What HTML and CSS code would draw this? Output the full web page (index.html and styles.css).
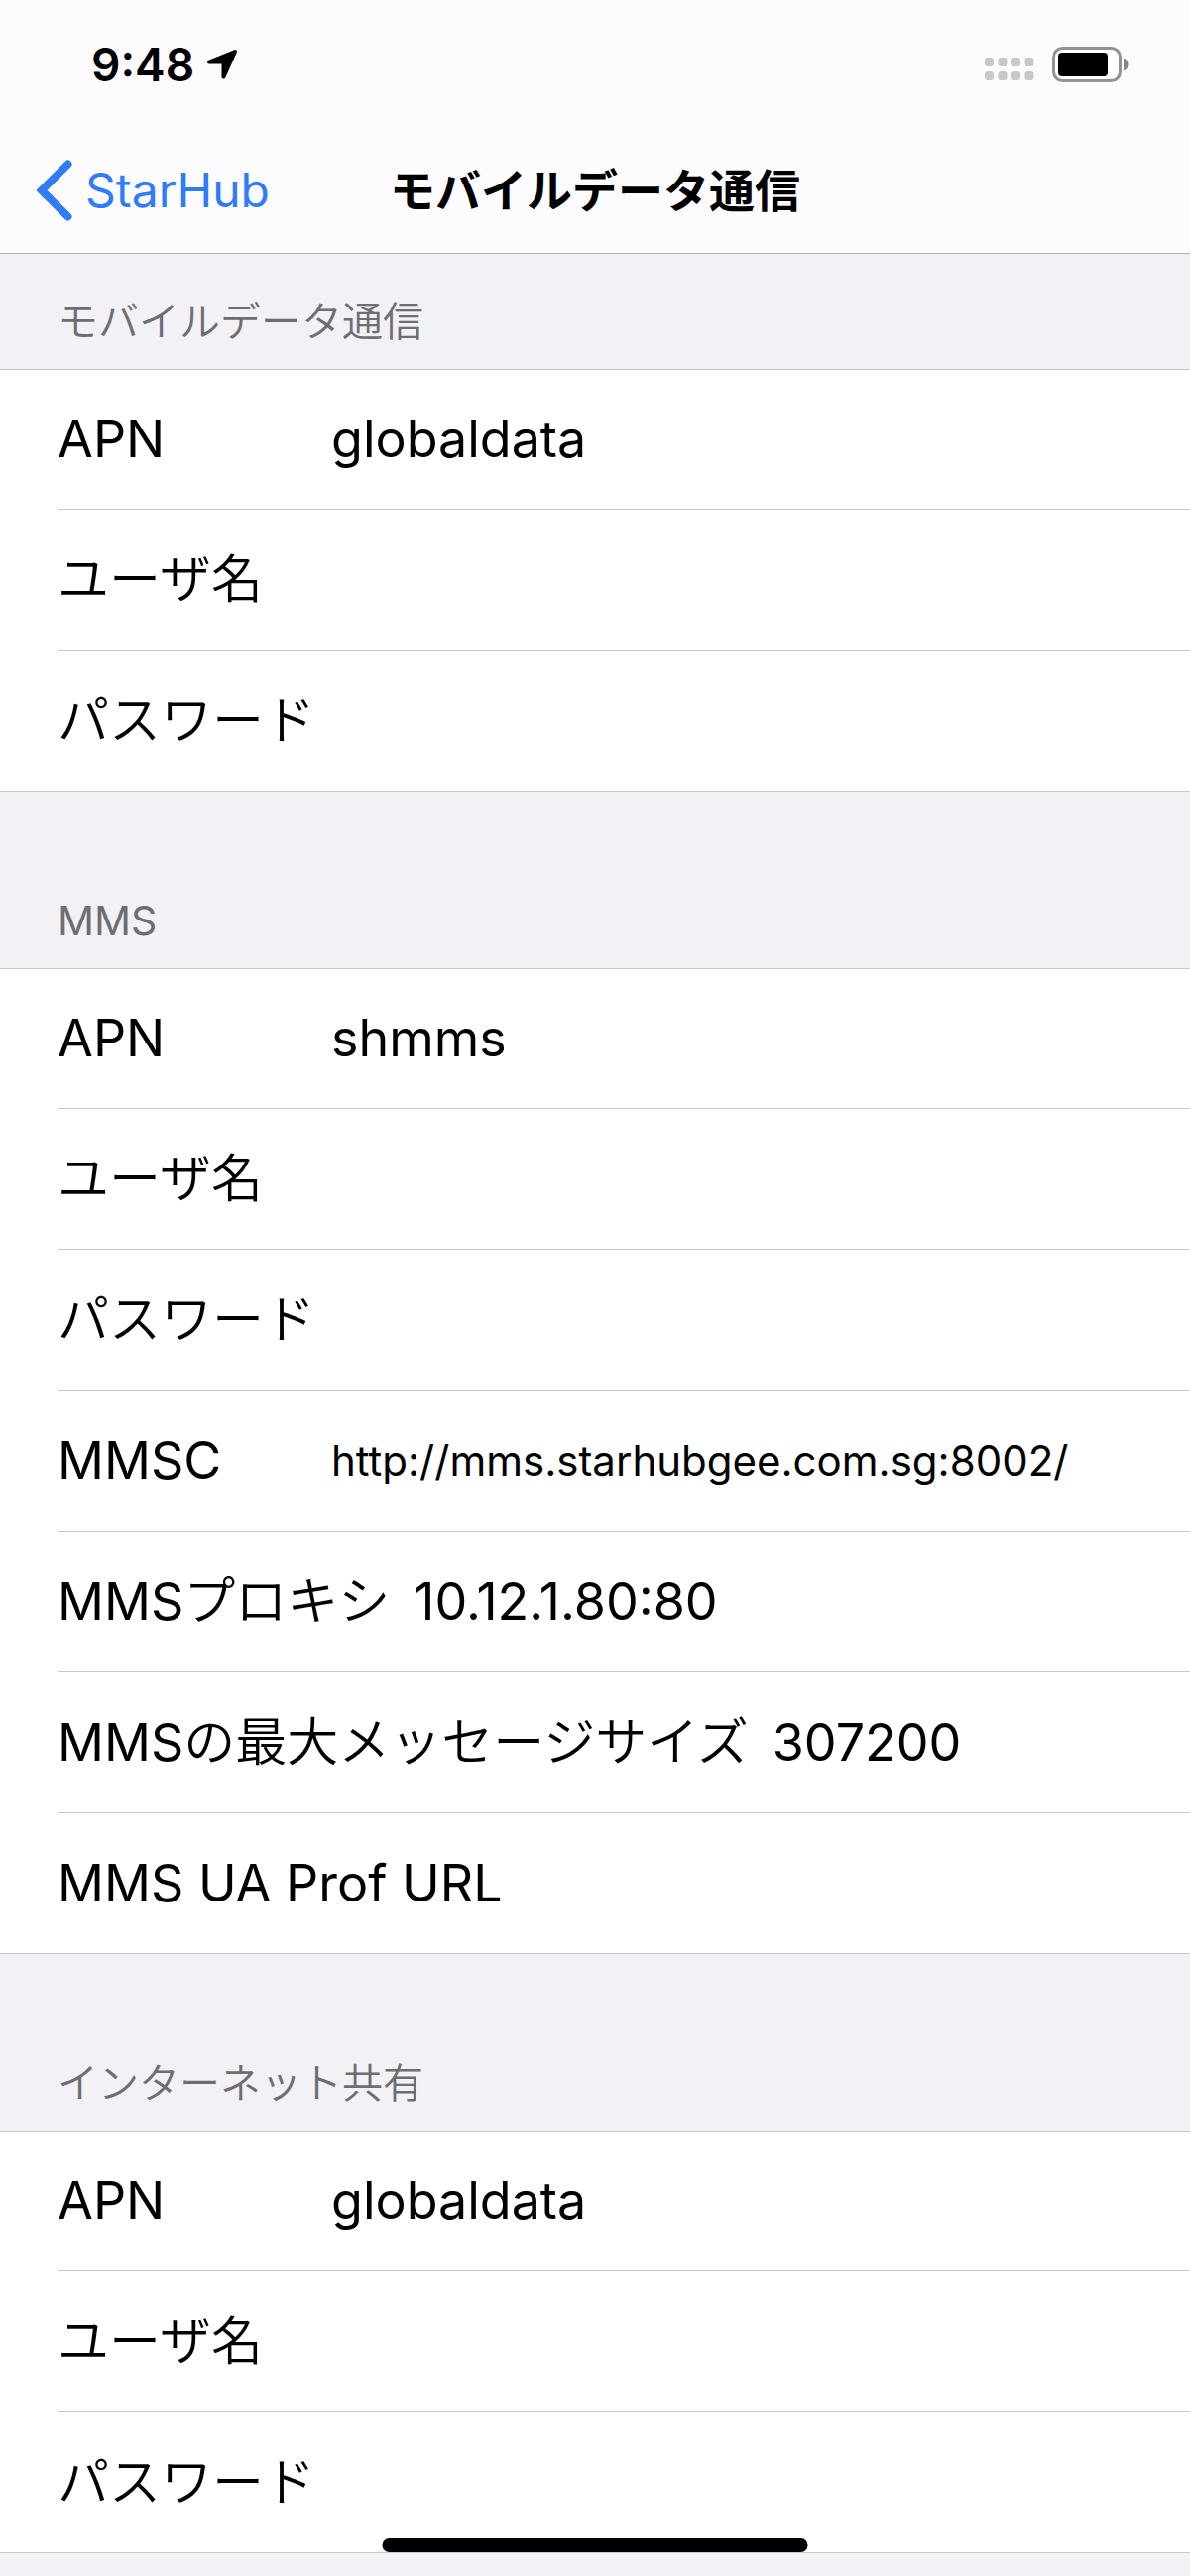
FILE: index.html
```
<!DOCTYPE html>
<html lang="ja">
<head>
  <meta charset="UTF-8" />
  <meta name="viewport" content="width=device-width, initial-scale=1.0"/>
  <title>モバイルデータ通信</title>
  <link rel="stylesheet" href="styles.css">
</head>
<body>
  <header>
    <div class="status-bar">
      <div class="status-left">
        <span class="time">9:48</span>
        <svg class="location-icon" viewBox="0 0 32 32" aria-hidden="true">
          <path d="M29 3 L3 13.500 H17.500 V28.500 Z" fill="#000" stroke="#000" stroke-width="4" stroke-linejoin="round"/>
        </svg>
      </div>
      <div class="status-right">
        <svg class="signal-icon" viewBox="0 0 50 24" fill="#c8c8ca" aria-hidden="true">
          <rect x="0" y="0" width="9" height="9" rx="3"/>
          <rect x="13.500" y="0" width="9" height="9" rx="3"/>
          <rect x="27" y="0" width="9" height="9" rx="3"/>
          <rect x="40.500" y="0" width="9" height="9" rx="3"/>
          <rect x="0" y="14" width="9" height="9" rx="3"/>
          <rect x="13.500" y="14" width="9" height="9" rx="3"/>
          <rect x="27" y="14" width="9" height="9" rx="3"/>
          <rect x="40.500" y="14" width="9" height="9" rx="3"/>
        </svg>
        <svg class="battery-icon" viewBox="0 0 77 36" aria-hidden="true">
          <rect x="1.500" y="1.500" width="67" height="33" rx="9" fill="#fff" stroke="#929294" stroke-width="3"/>
          <rect x="6" y="6" width="50" height="24" rx="4" fill="#000"/>
          <path d="M72 11.500 Q76.500 13 76.500 18 Q76.500 23 72 24.500 Z" fill="#858587"/>
        </svg>
      </div>
    </div>
    <nav class="nav-bar">
      <a href="#" class="back-link">
        <svg class="back-icon" viewBox="0 0 36 62" aria-hidden="true">
          <path d="M31.500 4.500 L5 31 L31.500 57.500" fill="none" stroke="#2f7bf8" stroke-width="8" stroke-linecap="round" stroke-linejoin="miter"/>
        </svg>
        <span>StarHub</span>
      </a>
      <h1>モバイルデータ通信</h1>
    </nav>
  </header>

  <main>
    <section>
      <h2 class="first">モバイルデータ通信</h2>
      <div class="list">
        <div class="row">
          <label for="data-apn">APN</label>
          <input type="text" id="data-apn" value="globaldata">
        </div>
        <div class="row">
          <label for="data-user">ユーザ名</label>
          <input type="text" id="data-user">
        </div>
        <div class="row">
          <label for="data-pass">パスワード</label>
          <input type="password" id="data-pass">
        </div>
      </div>
    </section>

    <section>
      <h2>MMS</h2>
      <div class="list">
        <div class="row">
          <label for="mms-apn">APN</label>
          <input type="text" id="mms-apn" value="shmms">
        </div>
        <div class="row">
          <label for="mms-user">ユーザ名</label>
          <input type="text" id="mms-user">
        </div>
        <div class="row">
          <label for="mms-pass">パスワード</label>
          <input type="password" id="mms-pass">
        </div>
        <div class="row">
          <label for="mmsc">MMSC</label>
          <input type="text" id="mmsc" class="long" value="http://mms.starhubgee.com.sg:8002/">
        </div>
        <div class="row">
          <label for="mms-proxy">MMSプロキシ</label>
          <input type="text" id="mms-proxy" value="10.12.1.80:80">
        </div>
        <div class="row">
          <label for="mms-size">MMSの最大メッセージサイズ</label>
          <input type="text" id="mms-size" value="307200">
        </div>
        <div class="row">
          <label for="mms-ua">MMS UA Prof URL</label>
          <input type="text" id="mms-ua">
        </div>
      </div>
    </section>

    <section>
      <h2>インターネット共有</h2>
      <div class="list">
        <div class="row">
          <label for="share-apn">APN</label>
          <input type="text" id="share-apn" value="globaldata">
        </div>
        <div class="row">
          <label for="share-user">ユーザ名</label>
          <input type="text" id="share-user">
        </div>
        <div class="row">
          <label for="share-pass">パスワード</label>
          <input type="password" id="share-pass">
        </div>
      </div>
    </section>
  </main>

  <div class="home-indicator"></div>
</body>
</html>
```
FILE: styles.css
```
:root {
  --bg-main: #f1f1f6;
  --header-bg: #fcfcfe;
  --header-line: #b0b0b3;
  --line: #c8c8cb;
  --text-color: #000000;
  --heading-color: #6d6d72;
  --link-color: #2f7bf8;
  --side: 58px;
}

* {
  margin: 0;
  padding: 0;
  box-sizing: border-box;
}

body {
  font-family: "Inter", "Noto Sans CJK JP DemiLight", "Noto Sans CJK JP", sans-serif;
  font-size: 52px;
  line-height: 64px;
  background: var(--bg-main);
  color: var(--text-color);
  min-height: 100vh;
}

header {
  background: var(--header-bg);
  border-bottom: 1px solid var(--header-line);
}

.status-bar {
  display: flex;
  justify-content: space-between;
  align-items: center;
  height: 128px;
  padding: 2px 62px 0 92px;
}

.status-left,
.status-right {
  display: flex;
  align-items: center;
}

.status-left {
  gap: 12px;
}

.status-right {
  gap: 18px;
}

.time {
  font-size: 46px;
  font-weight: 600;
}

.location-icon {
  width: 32px;
  height: 32px;
}

.signal-icon {
  width: 50px;
  height: 24px;
  margin-top: 10px;
}

.battery-icon {
  width: 77px;
  height: 36px;
}

.nav-bar {
  display: grid;
  grid-template-columns: 1fr auto 1fr;
  align-items: center;
  height: 127px;
  padding: 0 37px;
}

.back-link {
  display: flex;
  align-items: center;
  gap: 13px;
  font-size: 48px;
  color: var(--link-color);
  text-decoration: none;
}

.back-icon {
  width: 36px;
  height: 62px;
}

h1 {
  font-family: "Inter", "Noto Sans CJK JP", sans-serif;
  font-size: 46px;
  font-weight: bold;
}

h2 {
  display: flex;
  align-items: flex-end;
  height: 178px;
  padding: 0 var(--side) 16px;
  font-size: 41px;
  font-weight: normal;
  color: var(--heading-color);
}

h2.first {
  height: 116px;
}

.list {
  background: #ffffff;
}

.row {
  display: flex;
  align-items: center;
  gap: 24px;
  box-sizing: content-box;
  height: 141px;
  margin-left: var(--side);
  border-bottom: 1px solid var(--line);
}

/* the outer lines of a group run the full width */
.row:first-child,
.row:last-child {
  margin-left: 0;
  padding-left: var(--side);
}

.row:first-child {
  height: 140px;
  border-top: 1px solid var(--line);
  border-bottom: none;
}

.row:first-child + .row {
  border-top: 1px solid var(--line);
}

.row label {
  min-width: 252px;
  white-space: nowrap;
}

.row input {
  flex: 1;
  min-width: 0;
  border: none;
  outline: none;
  background: transparent;
  font: inherit;
  color: inherit;
}

.row input.long {
  font-size: 42px;
}

.home-indicator {
  position: fixed;
  left: 50%;
  bottom: 24px;
  width: 429px;
  height: 14px;
  border-radius: 7px;
  background: #000000;
  transform: translateX(-50%);
}
```
